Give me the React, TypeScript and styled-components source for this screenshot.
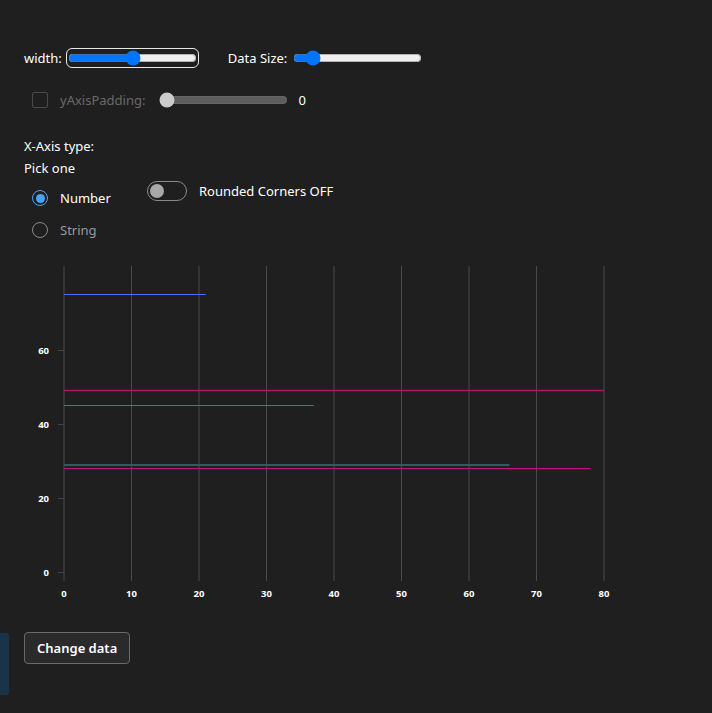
import React from "react";
import styled, { createGlobalStyle } from "styled-components";

const Global = createGlobalStyle`
  html, body { margin: 0; padding: 0; background: #1f1f1f; }
  body { font-family: "Segoe UI", "Noto Sans", sans-serif; color: #ffffff; font-size: 13px; }
`;

const Page = styled.div`
  position: relative;
  min-height: 713px;
  padding: 48px 24px 0 24px;
  box-sizing: border-box;
`;

const Row = styled.div<{ $mt?: number }>`
  display: flex;
  align-items: center;
  height: 20px;
  margin-top: ${(p) => p.$mt ?? 0}px;
`;

const Label = styled.label<{ $disabled?: boolean; $ml?: number }>`
  color: ${(p) => (p.$disabled ? "#6a6a6a" : "#ffffff")};
  margin-left: ${(p) => p.$ml ?? 0}px;
  margin-right: 4px;
  white-space: nowrap;
`;

const Range = styled.input<{ $focus?: boolean; $ml?: number }>`
  width: 129px;
  margin: 2px;
  margin-left: ${(p) => p.$ml ?? 2}px;
  accent-color: #0075ff;
  ${(p) => (p.$focus ? "outline: 1.5px solid #e8e8e8; outline-offset: 1px; border-radius: 4px;" : "")}
`;

const Check = styled.span`
  width: 14px;
  height: 14px;
  border: 1px solid #4a4a4a;
  border-radius: 2px;
  margin-left: 8px;
  margin-right: 12px;
`;

const Value = styled.span`
  margin-left: 8px;
`;

const Heading = styled.div<{ $mt?: number }>`
  line-height: 22px;
  margin-top: ${(p) => p.$mt ?? 0}px;
`;

const Options = styled.div`
  display: flex;
  align-items: flex-start;
  margin-top: 3px;
`;

const RadioGroup = styled.div`
  display: flex;
  flex-direction: column;
  width: 123px;
`;

const RadioRow = styled.div<{ $checked?: boolean }>`
  display: flex;
  align-items: center;
  height: 32px;
  color: ${(p) => (p.$checked ? "#ffffff" : "#9a9a9a")};
`;

const RadioCircle = styled.span<{ $checked?: boolean }>`
  box-sizing: border-box;
  width: 16px;
  height: 16px;
  border-radius: 50%;
  margin-left: 8px;
  margin-right: 12px;
  border: 1.5px solid ${(p) => (p.$checked ? "#4aa3f5" : "#8a8a8a")};
  display: flex;
  align-items: center;
  justify-content: center;
  &::after {
    content: "";
    width: 9px;
    height: 9px;
    border-radius: 50%;
    background: ${(p) => (p.$checked ? "#4aa3f5" : "transparent")};
  }
`;

const SwitchRow = styled.div`
  display: flex;
  align-items: center;
  margin-top: -1px;
  gap: 12px;
`;

const SwitchTrack = styled.span`
  box-sizing: border-box;
  width: 40px;
  height: 20px;
  border-radius: 10px;
  border: 1.5px solid #8a8a8a;
  display: flex;
  align-items: center;
  padding-left: 2px;
`;

const Knob = styled.span`
  width: 14px;
  height: 14px;
  border-radius: 50%;
  background: #a8a8a8;
`;

const ChartSvg = styled.svg`
  display: block;
  margin-top: 12px;
  margin-left: -24px;
  overflow: visible;
`;

const Button = styled.button`
  margin-top: 29px;
  height: 32px;
  padding: 0 12px;
  background: #2a2a2a;
  color: #ffffff;
  border: 1px solid #6a6a6a;
  border-radius: 4px;
  font-family: inherit;
  font-size: 13px;
  font-weight: 600;
`;

const SideTab = styled.div`
  position: absolute;
  left: 0;
  top: 633px;
  width: 9px;
  height: 62px;
  background: #193449;
  border-radius: 0 3px 3px 0;
`;

const ox = 64;
const oy = 314;
const sx = 6.75;
const sy = 3.7;
const X = (v: number) => ox + v * sx;
const Y = (v: number) => Math.round(oy - v * sy);

const lines = [
  { y: 75.1, x: 21, c: "#4f6bff", w: 1 },
  { y: 49.2, x: 80, c: "#b0106e", w: 1.5 },
  { y: 45.1, x: 37, c: "#5a6aa8", w: 1 },
  { y: 28.9, x: 66, c: "#275e60", w: 2 },
  { y: 28.1, x: 78, c: "#c01380", w: 1.2 },
];

function Chart() {
  const xt = [0, 10, 20, 30, 40, 50, 60, 70, 80];
  const yt = [0, 20, 40, 60];
  return (
    <ChartSvg width={680} height={345} viewBox="0 0 680 345">
      {xt.map((t) => (
        <line key={"g" + t} x1={X(t)} x2={X(t)} y1={8} y2={323} stroke="#4a4a4a" strokeWidth={1} />
      ))}
      {yt.map((t) => (
        <g key={"y" + t}>
          <line x1={58} x2={64} y1={Y(t) + 0.5} y2={Y(t) + 0.5} stroke="#444" strokeWidth={1} />
          <text x={49} y={Y(t) + 3.5} textAnchor="end" fill="#fff" fontSize={9.5} fontWeight={700} fontFamily="Segoe UI, Noto Sans, sans-serif">
            {t}
          </text>
        </g>
      ))}
      {xt.map((t) => (
        <text key={"x" + t} x={X(t)} y={339} textAnchor="middle" fill="#fff" fontSize={9.5} fontWeight={700} fontFamily="Segoe UI, Noto Sans, sans-serif">
          {t}
        </text>
      ))}
      {lines.map((l, i) => {
        const y = Y(l.y) + (l.w === 2 ? 0 : 0.5);
        return <line key={i} x1={X(0)} x2={X(l.x)} y1={y} y2={y} stroke={l.c} strokeWidth={l.w} />;
      })}
    </ChartSvg>
  );
}

export default function App() {
  return (
    <Page>
      <Global />
      <Row>
        <Label>width:</Label>
        <Range type="range" min={0} max={100} defaultValue={51} $focus />
        <Label $ml={29}>Data Size:</Label>
        <Range type="range" min={0} max={100} defaultValue={10} />
      </Row>
      <Row $mt={22}>
        <Check />
        <Label $disabled>yAxisPadding:</Label>
        <Range type="range" min={0} max={100} defaultValue={0} disabled $ml={10} />
        <Value>0</Value>
      </Row>
      <Heading $mt={25}>X-Axis type:</Heading>
      <Heading>Pick one</Heading>
      <Options>
        <RadioGroup>
          <RadioRow $checked>
            <RadioCircle $checked />
            Number
          </RadioRow>
          <RadioRow>
            <RadioCircle />
            String
          </RadioRow>
        </RadioGroup>
        <SwitchRow>
          <SwitchTrack>
            <Knob />
          </SwitchTrack>
          Rounded Corners OFF
        </SwitchRow>
      </Options>
      <Chart />
      <Button>Change data</Button>
      <SideTab />
    </Page>
  );
}
